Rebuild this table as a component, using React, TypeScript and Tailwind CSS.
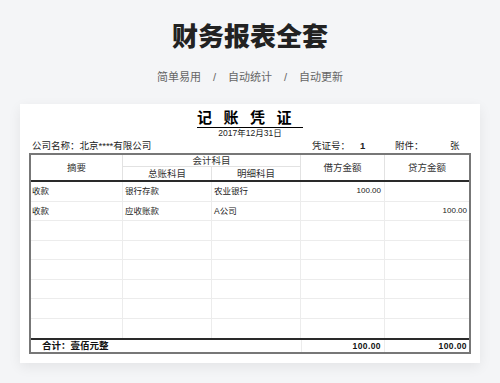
const FONT = "font-['Liberation_Sans','Noto_Sans_CJK_SC',sans-serif]";

type Entry = { summary: string; general: string; detail: string; debit: string; credit: string };

const entries: Entry[] = [
  { summary: "收款", general: "银行存款", detail: "农业银行", debit: "100.00", credit: "" },
  { summary: "收款", general: "应收账款", detail: "A公司", debit: "", credit: "100.00" },
  { summary: "", general: "", detail: "", debit: "", credit: "" },
  { summary: "", general: "", detail: "", debit: "", credit: "" },
  { summary: "", general: "", detail: "", debit: "", credit: "" },
  { summary: "", general: "", detail: "", debit: "", credit: "" },
  { summary: "", general: "", detail: "", debit: "", credit: "" },
  { summary: "", general: "", detail: "", debit: "", credit: "" },
];

function VoucherHeader() {
  return (
    <div className="grid grid-cols-[92px_89px_89px_84px_84px] grid-rows-[12px_13px] border-b-2 border-[#2a2a2a] text-[9.5px] leading-none text-[#333]">
      <div className="col-start-1 row-start-1 row-span-2 flex items-center justify-center border-r border-[#e2e2e2]">摘要</div>
      <div className="col-start-2 col-span-2 row-start-1 flex items-center justify-center border-r border-b border-[#e2e2e2]">会计科目</div>
      <div className="col-start-2 row-start-2 flex items-center justify-center border-r border-[#e2e2e2]">总账科目</div>
      <div className="col-start-3 row-start-2 flex items-center justify-center border-r border-[#e2e2e2]">明细科目</div>
      <div className="col-start-4 row-start-1 row-span-2 flex items-center justify-center border-r border-[#e2e2e2]">借方金额</div>
      <div className="col-start-5 row-start-1 row-span-2 flex items-center justify-center">贷方金额</div>
    </div>
  );
}

function VoucherRow({ entry, last }: { entry: Entry; last: boolean }) {
  return (
    <div className={`grid h-[19.5px] grid-cols-[92px_89px_89px_84px_84px] text-[8.5px] leading-none text-[#222] ${last ? "" : "border-b border-[#ececec]"}`}>
      <div className="flex items-center border-r border-[#ececec] pl-px">{entry.summary}</div>
      <div className="flex items-center border-r border-[#ececec] pl-[2px]">{entry.general}</div>
      <div className="flex items-center border-r border-[#ececec] pl-[2px]">{entry.detail}</div>
      <div className="flex items-center justify-end border-r border-[#ececec] pr-[3px] text-[8px]">{entry.debit}</div>
      <div className="flex items-center justify-end pr-[2px] text-[8px]">{entry.credit}</div>
    </div>
  );
}

function Voucher() {
  return (
    <div className="mt-[20px] h-[259px] w-[460px] bg-white px-[9px] pt-[5px] shadow-[0_4px_12px_rgba(0,0,0,0.07)]">
      <div className="flex justify-center">
        <span className="inline-block border-b border-black text-[15px] font-bold leading-[18px] tracking-[11.5px] text-black">记账凭证</span>
      </div>
      <div className="h-[11px] text-center text-[8.5px] leading-[11px] text-[#222]">2017年12月31日</div>
      <div className="flex h-[14px] items-center text-[9.5px] leading-none text-[#222]">
        <span className="w-[283px] pl-[3px]">公司名称：北京****有限公司</span>
        <span className="w-[48px]">凭证号：</span>
        <span className="w-[35px] font-bold">1</span>
        <span className="w-[55px]">附件：</span>
        <span>张</span>
      </div>
      <div className="w-[442px] border-2 border-[#777]">
        <VoucherHeader />
        {entries.map((entry, i) => (
          <VoucherRow key={i} entry={entry} last={i === entries.length - 1} />
        ))}
        <div className="grid h-[14px] grid-cols-[92px_89px_89px_84px_84px] border-t-2 border-[#2a2a2a] text-[9px] font-bold leading-none text-[#111]">
          <div className="col-span-3 flex items-center whitespace-nowrap pl-[11px] text-[9.5px]">合计：壹佰元整</div>
          <div className="flex items-center justify-end border-x border-[#ececec] pr-[3px] text-[8.5px] tracking-[0.4px]">100.00</div>
          <div className="flex items-center justify-end pr-[2px] text-[8.5px] tracking-[0.4px]">100.00</div>
        </div>
      </div>
    </div>
  );
}

export default function App() {
  return (
    <div className={`flex h-[383px] w-[500px] flex-col items-center overflow-hidden bg-[#f4f5f7] pt-[22px] ${FONT}`}>
      <h1 className="text-[26px] font-black leading-[30px] text-[#222]">财务报表全套</h1>
      <div className="mt-[18px] flex h-[14px] items-center gap-[12px] text-[11px] leading-none text-[#666]">
        <span>简单易用</span>
        <span>/</span>
        <span>自动统计</span>
        <span>/</span>
        <span>自动更新</span>
      </div>
      <Voucher />
    </div>
  );
}
